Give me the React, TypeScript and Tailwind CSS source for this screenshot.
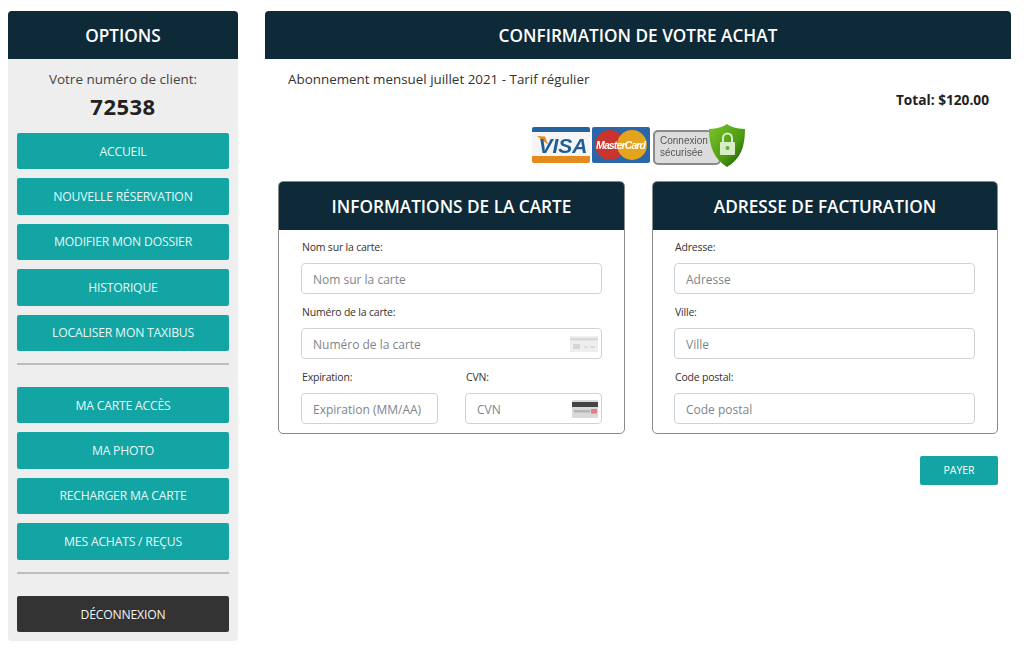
const font = { fontFamily: '"Open Sans", "Noto Sans", sans-serif' };

function MenuButton({ label, dark }: { label: string; dark?: boolean }) {
  return (
    <button
      className={`w-full h-[36.4px] pt-[1px] rounded-[2px] text-[12.2px] tracking-[-0.2px] flex items-center justify-center ${
        dark ? 'bg-[#333333] text-[#f4f4f4] pt-[3px]' : 'bg-[#12a5a3] text-[#e8f8f8]'
      }`}
    >
      {label}
    </button>
  );
}

function Field({ label, placeholder, icon, className }: { label: string; placeholder: string; icon?: React.ReactNode; className?: string }) {
  return (
    <div className={className}>
      <div className="h-[17px] text-[10.5px] leading-[17px] text-[#333] tracking-[-0.2px] pl-[1px]">{label}</div>
      <div className="relative mt-[7px] h-[31px] border border-[#cfd3d6] rounded-[4px] bg-white flex items-center pl-[11px] pt-[2px] text-[12px] text-[#7d858c]">
        {placeholder}
        {icon}
      </div>
    </div>
  );
}

function CardIcon() {
  return (
    <svg className="absolute right-[3px] top-[7px] blur-[0.5px]" width="28" height="16" viewBox="0 0 28 16">
      <rect width="28" height="16" fill="#eeeeee" />
      <rect y="2" width="28" height="2.5" fill="#d8d8d8" />
      <rect x="3" y="8" width="7" height="5" fill="#d6d6d6" />
      <rect x="14" y="10" width="4" height="2" fill="#dddddd" />
      <rect x="20" y="10" width="5" height="2" fill="#dddddd" />
    </svg>
  );
}

function CvnIcon() {
  return (
    <svg className="absolute right-[3px] top-[6px] blur-[0.5px]" width="26" height="18" viewBox="0 0 26 18">
      <rect width="26" height="18" rx="1" fill="#d9d9d9" />
      <rect y="2" width="26" height="5" fill="#444444" />
      <rect x="2" y="10" width="16" height="2.5" fill="#b5b5b5" />
      <rect x="19" y="9" width="6" height="4.5" fill="#e27d80" />
    </svg>
  );
}

function Logos() {
  return (
    <svg className="blur-[0.5px]" width="215" height="44" viewBox="0 0 215 44">
      <defs>
        <linearGradient id="shield" x1="0" y1="0" x2="1" y2="1">
          <stop offset="0" stopColor="#7cc52c" />
          <stop offset="0.6" stopColor="#4c9a12" />
          <stop offset="1" stopColor="#1c4a06" />
        </linearGradient>
      </defs>
      {/* visa */}
      <rect x="0" y="3" width="58" height="36" rx="2" fill="#f5f5f5" />
      <path d="M0 5a2 2 0 0 1 2-2h54a2 2 0 0 1 2 2v3H0z" fill="#24639f" />
      <path d="M0 32h58v5a2 2 0 0 1-2 2H2a2 2 0 0 1-2-2z" fill="#e58a1f" />
      <path d="M5 12l8 .5 3 8z" fill="#e58a1f" />
      <text x="31" y="29" textAnchor="middle" fontFamily="Liberation Sans" fontSize="21" fontWeight="700" fontStyle="italic" fill="#1f5f98">VISA</text>
      {/* mastercard */}
      <rect x="60" y="3" width="58" height="36" rx="2" fill="#2a66a8" />
      <circle cx="78" cy="21" r="15" fill="#c9352e" />
      <circle cx="100" cy="21" r="15" fill="#e4a41e" />
      <text x="89" y="25" textAnchor="middle" fontFamily="Liberation Sans" fontSize="10.5" fontWeight="700" fontStyle="italic" fill="#ffffff" textLength="50">MasterCard</text>
      {/* connexion */}
      <rect x="122" y="7" width="66" height="33" rx="4" fill="#dcdcdc" stroke="#8a8a8a" strokeWidth="2" />
      <text x="128" y="20" fontFamily="Liberation Sans" fontSize="10" fill="#555555">Connexion</text>
      <text x="128" y="32" fontFamily="Liberation Sans" fontSize="10" fill="#555555">sécurisée</text>
      <path d="M195 0c4 3 9 4.500 18 5 0 17-4 30-18 38-13-8-18-21-18-38 8-.5 14-2 18-5z" fill="url(#shield)" />
      <rect x="188" y="18" width="15" height="13" rx="1" fill="#d8ecc8" />
      <path d="M191 18v-4a4.500 4.500 0 0 1 9 0v4" fill="none" stroke="#d8ecc8" strokeWidth="2" />
      <circle cx="195.500" cy="24" r="2" fill="#6cae30" />
    </svg>
  );
}

export default function App() {
  const top = ['ACCUEIL', 'NOUVELLE RÉSERVATION', 'MODIFIER MON DOSSIER', 'HISTORIQUE', 'LOCALISER MON TAXIBUS'];
  const bottom = ['MA CARTE ACCÈS', 'MA PHOTO', 'RECHARGER MA CARTE', 'MES ACHATS / REÇUS'];

  return (
    <div className="w-[1024px] h-[650px] bg-white flex items-start pt-[11px] pl-[8px] overflow-hidden" style={font}>
      {/* Sidebar */}
      <aside className="w-[230px] h-[630px] shrink-0 bg-[#eeeeee] rounded-[4px] overflow-hidden">
        <h2 className="h-[48px] pt-[1px] bg-[#0e2a38] text-white text-[17.2px] font-semibold flex items-center justify-center">OPTIONS</h2>
        <div className="px-[9px]">
          <p className="mt-[10px] h-[20px] text-center text-[13.5px] leading-[20px] text-[#444]">Votre numéro de client:</p>
          <p className="mt-[3px] h-[28px] text-center text-[22px] leading-[28px] font-bold text-[#222] tracking-[0.5px]">72538</p>
          <div className="mt-[13px] flex flex-col gap-[9px]">
            {top.map((t) => <MenuButton key={t} label={t} />)}
          </div>
          <hr className="mt-[12px] border-t-2 border-[#bdbdbd]" />
          <div className="mt-[22px] flex flex-col gap-[9px]">
            {bottom.map((t) => <MenuButton key={t} label={t} />)}
          </div>
          <hr className="mt-[12px] border-t-2 border-[#bdbdbd]" />
          <div className="mt-[22px]"><MenuButton label="DÉCONNEXION" dark /></div>
        </div>
      </aside>

      {/* Main */}
      <main className="ml-[27px] w-[746px] shrink-0">
        <h1 className="h-[48px] pt-[1px] bg-[#0e2a38] rounded-t-[4px] text-white text-[17.2px] font-semibold flex items-center justify-center">CONFIRMATION DE VOTRE ACHAT</h1>
        <p className="mt-[10px] ml-[23px] h-[20px] text-[13.4px] leading-[20px] text-[#333]">Abonnement mensuel juillet 2021 - Tarif régulier</p>
        <p className="mt-[1px] mr-[22px] h-[20px] text-right text-[13.7px] leading-[20px] font-bold text-[#222]">Total: $120.00</p>
        <div className="mt-[14px] flex justify-center pl-[3px]"><Logos /></div>
        <div className="mt-[13px] mx-[13px] flex justify-between">
          <section className="w-[347px] h-[253px] border border-[#8a8a8a] rounded-[5px] overflow-hidden">
            <h3 className="h-[48px] pt-[2px] bg-[#0e2a38] text-white text-[17.2px] font-semibold flex items-center justify-center">INFORMATIONS DE LA CARTE</h3>
            <div className="px-[22px] pt-[9px] flex flex-col gap-[10px]">
              <Field label="Nom sur la carte:" placeholder="Nom sur la carte" />
              <Field label="Numéro de la carte:" placeholder="Numéro de la carte" icon={<CardIcon />} />
              <div className="flex justify-between">
                <Field className="w-[137px]" label="Expiration:" placeholder="Expiration (MM/AA)" />
                <Field className="w-[137px]" label="CVN:" placeholder="CVN" icon={<CvnIcon />} />
              </div>
            </div>
          </section>
          <section className="w-[346px] h-[253px] border border-[#8a8a8a] rounded-[5px] overflow-hidden">
            <h3 className="h-[48px] pt-[2px] bg-[#0e2a38] text-white text-[17.2px] font-semibold flex items-center justify-center">ADRESSE DE FACTURATION</h3>
            <div className="pl-[21px] pr-[22px] pt-[9px] flex flex-col gap-[10px]">
              <Field label="Adresse:" placeholder="Adresse" />
              <Field label="Ville:" placeholder="Ville" />
              <Field label="Code postal:" placeholder="Code postal" />
            </div>
          </section>
        </div>
        <div className="mt-[22px] mr-[13px] flex justify-end">
          <button className="w-[78px] h-[29px] pt-[1px] bg-[#12a5a3] rounded-[2px] text-white text-[10.5px]">PAYER</button>
        </div>
      </main>
    </div>
  );
}
